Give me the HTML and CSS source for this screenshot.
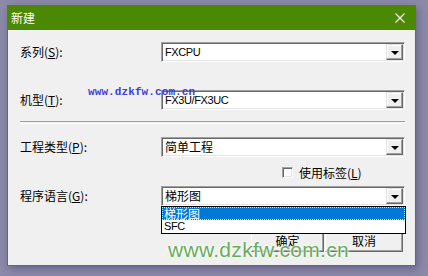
FILE: index.html
```html
<!DOCTYPE html>
<html lang="zh-CN">
<head>
    <meta charset="UTF-8">
    <title>新建</title>
    <link rel="stylesheet" href="styles.css">
</head>
<body>
    <div class="dialog">
        <div class="titlebar">
            <span class="title">新建</span>
            <svg class="close" width="10" height="10" viewBox="0 0 10 10">
                <path d="M0.5 0.5 L9.5 9.5 M9.5 0.5 L0.5 9.5" stroke="#fff" stroke-width="1.1" fill="none"/>
            </svg>
        </div>
        <div class="content">
            <div class="row first">
                <span class="label">系列(<u>S</u>):</span>
                <div class="combo"><span class="value latin">FXCPU</span><span class="drop"></span></div>
            </div>
            <div class="row second">
                <span class="label">机型(<u>T</u>):</span>
                <div class="combo"><span class="value latin">FX3U/FX3UC</span><span class="drop"></span></div>
            </div>
            <div class="sep"></div>
            <div class="row third">
                <span class="label">工程类型(<u>P</u>):</span>
                <div class="combo"><span class="value">简单工程</span><span class="drop"></span></div>
            </div>
            <div class="check-row">
                <span class="checkbox"></span>
                <span>使用标签(<u>L</u>)</span>
            </div>
            <div class="row fourth">
                <span class="label">程序语言(<u>G</u>):</span>
                <div class="combo open">
                    <span class="value">梯形图</span><span class="drop"></span>
                    <ul class="listbox">
                        <li class="selected"><span>梯形图</span></li>
                        <li class="latin">SFC</li>
                    </ul>
                </div>
            </div>
            <div class="buttons">
                <button class="ok">确定</button>
                <button class="cancel">取消</button>
            </div>
        </div>
        <div class="wm-blue">www.dzkfw.com.cn</div>
        <div class="wm-green">www.dzkfw.com.cn</div>
    </div>
</body>
</html>
```

FILE: styles.css
```css
body { margin: 0; background: #8d89a9; font-family: "Noto Sans CJK SC", "Liberation Sans", sans-serif; font-size: 12px; color: #000; width: 428px; height: 276px; overflow: hidden; }
u { text-decoration: underline; text-underline-offset: 1px; }

.dialog { position: relative; margin: 5px 0 0 7px; width: 409px; height: 261px; box-sizing: border-box; border: 1px solid #4b8905; background: #f0f0f0; box-shadow: 2px 3px 8px rgba(60, 55, 90, 0.45); }
.titlebar { height: 24px; margin: -1px -1px 0; padding: 1px 11px 0 4px; background: #4b8905; display: flex; align-items: center; justify-content: space-between; }
.title { color: #fff; font-size: 12px; line-height: 14px; }

.content { padding: 12px 10px 0 12px; }
.row { display: grid; grid-template-columns: 141px 1fr; align-items: center; height: 20px; }
.row.second { margin-top: 28px; }
.row.third { margin-top: 13px; }
.row.fourth { margin-top: 7px; }
.label { line-height: 14px; white-space: nowrap; }

.combo { position: relative; height: 20px; box-sizing: border-box; background: #fff; border: 1px solid; border-color: #a0a0a0 #fff #fff #a0a0a0; box-shadow: inset 1px 1px 0 #696969, inset -1px -1px 0 #e3e3e3; display: flex; align-items: center; padding-left: 3px; }
.value { line-height: 14px; }
.latin { font-family: "Liberation Sans", sans-serif; font-size: 11px; letter-spacing: -0.4px; }
.drop { position: absolute; right: 1px; top: 1px; width: 17px; height: 16px; box-sizing: border-box; background: #f0f0f0; border: 1px solid; border-color: #e3e3e3 #696969 #696969 #e3e3e3; box-shadow: inset -1px -1px 0 #a0a0a0, inset 1px 1px 0 #fff; }
.drop::after { content: ""; position: absolute; left: 4px; top: 6px; border-left: 4px solid transparent; border-right: 4px solid transparent; border-top: 4px solid #000; }

.sep { margin-top: 11px; height: 1px; border-top: 1px solid #a0a0a0; border-bottom: 1px solid #fff; }

.check-row { margin-top: 9px; height: 13px; padding-left: 262px; display: flex; align-items: center; gap: 6px; }
.checkbox { width: 11px; height: 11px; box-sizing: border-box; background: #fff; border: 1px solid; border-color: #a0a0a0 #fff #fff #a0a0a0; box-shadow: inset 1px 1px 0 #696969, inset -1px -1px 0 #e3e3e3; }
.check-row span:last-child { line-height: 14px; }

.listbox { position: absolute; left: -1px; top: 19px; width: 245px; margin: 0; padding: 0; list-style: none; box-sizing: border-box; border: 1px solid #000; background: #fff; z-index: 2; }
.listbox li { height: 13px; line-height: 13px; padding-left: 2px; }
.listbox li.selected { background: #0078d7; color: #fff; outline: 1px dotted #cfe3f5; outline-offset: -1px; }

.buttons { margin-top: 23px; display: flex; justify-content: flex-end; gap: 1px; padding-right: 2px; }
.buttons button { height: 23px; font-family: "Noto Sans CJK SC", sans-serif; font-size: 12px; background: #f0f0f0; border: 1px solid; border-color: #fff #696969 #696969 #fff; box-shadow: inset -1px -1px 0 #a0a0a0; padding: 0; }
.buttons .ok { width: 73px; }
.buttons .cancel { width: 78px; }

.wm-blue { position: absolute; left: 80px; top: 80px; font-family: "Liberation Mono", monospace; font-size: 11px; font-weight: bold; color: #3d3de0; letter-spacing: 0.1px; }
.wm-green { position: absolute; left: 160px; top: 232px; font-family: "Liberation Sans", sans-serif; font-size: 21px; letter-spacing: 0.3px; color: #68ad58; z-index: 3; text-shadow: 0 0 2px #fff, 0 0 2px #fff, 0 0 3px #fff; }
```
